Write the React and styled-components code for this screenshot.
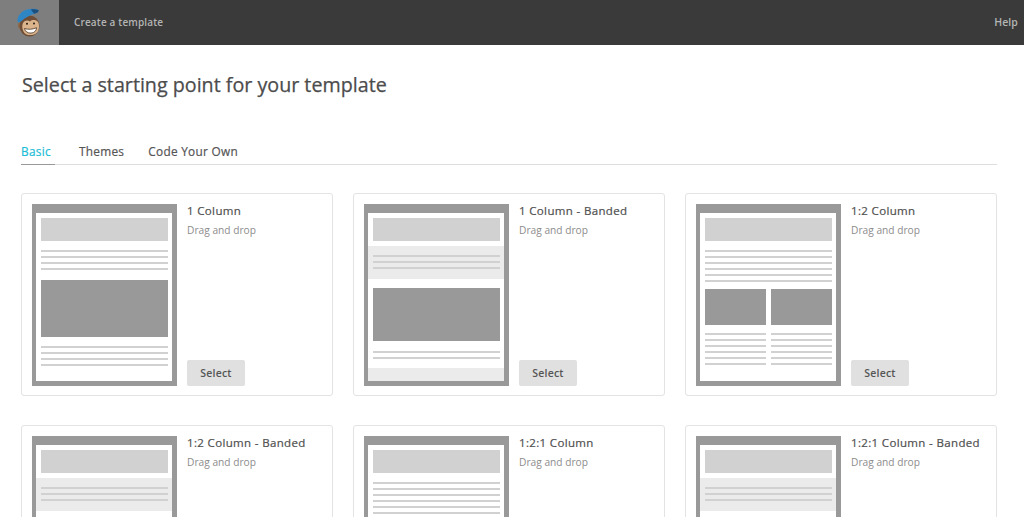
import React from 'react';
import styled, { createGlobalStyle } from 'styled-components';

const GlobalStyle = createGlobalStyle`
  html, body {
    margin: 0;
    padding: 0;
    height: 100%;
    overflow: hidden;
    background: #fff;
    font-family: "Open Sans", "Liberation Sans", sans-serif;
  }
  * {
    box-sizing: border-box;
  }
`;

const TopBar = styled.header`
  display: flex;
  align-items: center;
  height: 45px;
  padding-right: 6px;
  background: #3a3a3a;
  color: #b4b4b4;
  font-size: 10.5px;
  font-weight: 600;
`;

const LogoCell = styled.div`
  display: flex;
  align-items: center;
  justify-content: center;
  width: 59px;
  height: 45px;
  padding-right: 2px;
  background: #7e7e7e;
`;

const BarTitle = styled.span`
  flex: 1;
  margin-left: 15px;
  margin-top: -2px;
  font-size: 10px;
  letter-spacing: 0.15px;
`;

const Help = styled.a`
  letter-spacing: 0.1px;
  margin-top: -2px;
`;

const Main = styled.main`
  padding: 0 27px 24px 21px;
`;

const Title = styled.h1`
  margin: 26px 0 0 1px;
  height: 28px;
  font-size: 19.7px;
  line-height: 28px;
  font-weight: 500;
  color: #4c4c4c;
  -webkit-text-stroke: 0.25px #4c4c4c;
`;

const Tabs = styled.nav`
  display: flex;
  gap: 24px;
  height: 28px;
  margin-top: 38px;
  border-bottom: 1px solid #dedede;
`;

const Tab = styled.a`
  height: 28px;
  padding-right: ${props => (props.$active ? '4px' : '0')};
  font-size: 11.8px;
  line-height: 28px;
  font-weight: 500;
  letter-spacing: 0.3px;
  -webkit-text-stroke: 0.2px;
  color: ${props => (props.$active ? '#1abcd6' : '#555')};
  border-bottom: 1px solid ${props => (props.$active ? '#999' : 'transparent')};
`;

const Grid = styled.section`
  display: grid;
  grid-template-columns: repeat(3, 312px);
  gap: 29px 20px;
  margin-top: 28px;
`;

const Card = styled.article`
  display: flex;
  gap: 10px;
  height: 203px;
  padding: 10px 10px 9px;
  background: #fff;
  border: 1px solid #e3e3e3;
  border-radius: 3px;
`;

const Thumb = styled.div`
  flex: none;
  width: 145px;
  height: 182px;
  padding: 9px 5px 5px 4px;
  background: #999;
`;

const Sheet = styled.div`
  display: flex;
  flex-direction: column;
  height: 100%;
  background: #fff;
`;

const Head = styled.div`
  flex: none;
  height: 23px;
  margin: 5px 4px 0 5px;
  background: #d1d1d1;
`;

const Band = styled.div`
  flex: none;
  height: 33px;
  margin-top: 5px;
  padding-top: 9px;
  background: #ebebeb;
`;

const Lines = styled.div`
  display: flex;
  flex-direction: column;
  gap: 4px;
  flex: none;
  margin: ${props => props.$top || 0}px ${props => (props.$bare ? '0' : '4px')} 0 ${props => (props.$bare ? '0' : '5px')};
`;

const Line = styled.i`
  display: block;
  height: 2px;
  background: #d1d1d1;
`;

const Picture = styled.div`
  flex: none;
  height: ${props => props.$height}px;
  margin: ${props => props.$top}px 4px 0 5px;
  background: #999;
`;

const Split = styled.div`
  display: grid;
  grid-template-columns: 61px 61px;
  gap: 5px;
  margin: ${props => props.$top}px 4px 0 5px;
`;

const SplitPicture = styled.div`
  height: ${props => props.$height}px;
  background: #999;
`;

const Foot = styled.div`
  height: 13px;
  margin-top: auto;
  background: #ebebeb;
`;

const Info = styled.div`
  display: flex;
  flex-direction: column;
  align-items: flex-start;
  flex: 1;
  min-width: 0;
`;

const Name = styled.h3`
  margin: -1px 0 0;
  font-size: 11.5px;
  line-height: 15px;
  font-weight: 500;
  letter-spacing: 0.35px;
  -webkit-text-stroke: 0.2px;
  color: #4f4f4f;
`;

const Kind = styled.p`
  margin: 5px 0 0;
  font-size: 10.2px;
  line-height: 15px;
  color: #8c8c8c;
`;

const SelectButton = styled.button`
  width: 58px;
  height: 26px;
  margin-top: auto;
  padding: 0;
  border: 0;
  border-radius: 2px;
  background: #e0e0e0;
  color: #555;
  font-family: inherit;
  font-size: 10.5px;
  font-weight: 600;
  letter-spacing: 0.2px;
`;

const LineStack = ({ count, top, bare }) => (
  <Lines $top={top} $bare={bare}>
    {Array.from({ length: count }).map((_, i) => (
      <Line key={i} />
    ))}
  </Lines>
);

const OneColumn = () => (
  <Sheet>
    <Head />
    <LineStack count={4} top={9} />
    <Picture $height={57} $top={10} />
    <LineStack count={4} top={9} />
  </Sheet>
);

const OneColumnBanded = () => (
  <Sheet>
    <Head />
    <Band>
      <LineStack count={3} />
    </Band>
    <Picture $height={53} $top={9} />
    <LineStack count={2} top={10} />
    <Foot />
  </Sheet>
);

const TwoColumn = () => (
  <Sheet>
    <Head />
    <LineStack count={6} top={9} />
    <Split $top={7}>
      <SplitPicture $height={36} />
      <SplitPicture $height={36} />
    </Split>
    <Split $top={8}>
      <LineStack count={6} bare />
      <LineStack count={6} bare />
    </Split>
  </Sheet>
);

const templates = [
  { name: '1 Column', preview: OneColumn },
  { name: '1 Column - Banded', preview: OneColumnBanded },
  { name: '1:2 Column', preview: TwoColumn },
  { name: '1:2 Column - Banded', preview: OneColumnBanded },
  { name: '1:2:1 Column', preview: TwoColumn },
  { name: '1:2:1 Column - Banded', preview: OneColumnBanded },
];

const Freddie = () => (
  <svg width="26" height="30" viewBox="0 0 26 30" aria-hidden="true">
    <ellipse cx="4.5" cy="17.5" rx="2.6" ry="3.2" fill="#8f6a4a" />
    <ellipse cx="13.5" cy="18" rx="10" ry="10.5" fill="#6f4e37" />
    <path d="M7 15c2-3 5-3 7-1.500 2-2 6-2 8 .5 1.500 2.500 1.500 8-1 10.500-3 3.200-9 3.400-12 1C6.500 23 5.500 18 7 15z" fill="#d9b48c" />
    <path d="M8.500 20.500c3.500 1.200 8 1 12-.8 0 3-2 5.200-5.500 5.400-3.500.2-6-1.800-6.500-4.600z" fill="#fff" stroke="#4b3423" strokeWidth="0.8" />
    <circle cx="11" cy="15.800" r="1" fill="#2b1d14" />
    <circle cx="18" cy="15.500" r="1" fill="#2b1d14" />
    <path d="M1.500 13.500C1 8.500 5 3 11 1.500c4-1 9-.8 11.500.5.500 1.500-1 2.500-2 3-5 1.500-11 4-15.500 8.500-1.500 1-3 1.200-3.500 0z" fill="#2f86c5" />
    <path d="M15 1.200c3-.2 6 0 7.500.8.500 1.500-1 2.500-2 3l-2.500.8c-1-1.800-2.500-3-3-4.600z" fill="#1c4f7d" />
  </svg>
);

const App = () => {
  return (
    <>
      <GlobalStyle />
      <TopBar>
        <LogoCell>
          <Freddie />
        </LogoCell>
        <BarTitle>Create a template</BarTitle>
        <Help>Help</Help>
      </TopBar>
      <Main>
        <Title>Select a starting point for your template</Title>
        <Tabs>
          <Tab $active>Basic</Tab>
          <Tab>Themes</Tab>
          <Tab>Code Your Own</Tab>
        </Tabs>
        <Grid>
          {templates.map(({ name, preview: Preview }) => (
            <Card key={name}>
              <Thumb>
                <Preview />
              </Thumb>
              <Info>
                <Name>{name}</Name>
                <Kind>Drag and drop</Kind>
                <SelectButton>Select</SelectButton>
              </Info>
            </Card>
          ))}
        </Grid>
      </Main>
    </>
  );
};

export default App;
